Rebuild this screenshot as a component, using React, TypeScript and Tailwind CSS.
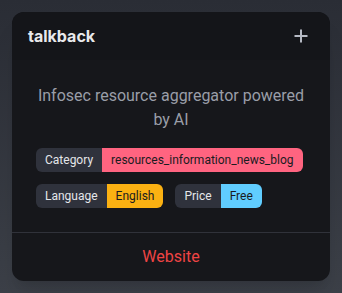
import React from 'react';

type Tag = { label: string; value: string; color: string };

const rows: Tag[][] = [
  [{ label: 'Category', value: 'resources_information_news_blog', color: 'bg-[#ff6480]' }],
  [
    { label: 'Language', value: 'English', color: 'bg-[#fbb112]' },
    { label: 'Price', value: 'Free', color: 'bg-[#60cdff]' },
  ],
];

function Badge({ tag }: { tag: Tag }) {
  return (
    <div className="flex h-6 overflow-hidden rounded-md text-xs leading-6">
      <span className="bg-[#2f323c] px-[9px] text-[#e4e6ea]">{tag.label}</span>
      <span className={`${tag.color} px-[9px] text-[#1a1b1f]`}>{tag.value}</span>
    </div>
  );
}

export default function App() {
  return (
    <div
      className="min-h-[293px] w-full bg-gradient-to-b from-[#2a2d35] to-[#3c4048] p-3"
      style={{ fontFamily: 'Roboto, "Liberation Sans", sans-serif' }}
    >
      <div className="w-[318px] overflow-hidden rounded-xl bg-[#16171b] shadow-xl">
        <div className="flex h-12 items-center justify-between bg-[#141519] px-4">
          <h3 className="text-base font-bold text-[#e8e9ec]" style={{ fontFamily: 'Inter, sans-serif' }}>
            talkback
          </h3>
          <svg width="14" height="14" viewBox="0 0 14 14" className="mr-[6px] text-[#b6bac4]">
            <path d="M7 0.5v13M0.5 7h13" stroke="currentColor" strokeWidth="2" />
          </svg>
        </div>
        <div className="px-6 py-6">
          <p className="text-center text-base leading-6 text-[#9a9ea8]">
            Infosec resource aggregator powered by AI
          </p>
          <div className="mt-4 flex flex-col gap-3">
            {rows.map((row, i) => (
              <div key={i} className="flex gap-3">
                {row.map((t) => (
                  <Badge key={t.label} tag={t} />
                ))}
              </div>
            ))}
          </div>
        </div>
        <div className="border-t border-[#30323a] py-3 text-center text-base leading-6 text-[#ef4444]">
          Website
        </div>
      </div>
    </div>
  );
}
